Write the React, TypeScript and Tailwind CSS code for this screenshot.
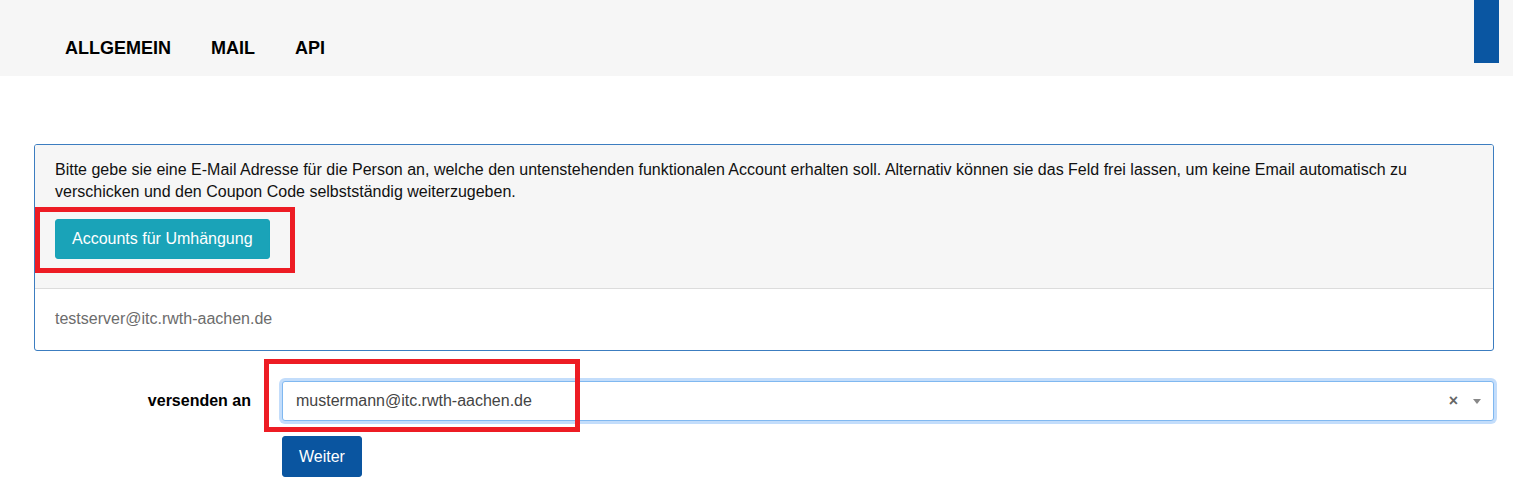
import React from 'react';

const navItems = ['ALLGEMEIN', 'MAIL', 'API'];

const App: React.FC = () => {
    return (
        <div className="relative min-h-[493px] bg-white text-black font-['Liberation_Sans',Arial,sans-serif]">
            {/* --- HEADER --- */}
            <div className="relative h-[76px] bg-[#f6f6f6]">
                <nav className="flex pl-[45px] pt-[35px]">
                    {navItems.map(item => (
                        <a key={item} className="px-[20px] text-[18px] leading-[26px] font-bold text-black">{item}</a>
                    ))}
                </nav>
                <div className="absolute left-[1474px] top-0 w-[25px] h-[63px] bg-[#0a56a2]"></div>
            </div>

            {/* --- CONTENT --- */}
            <div className="ml-[34px] w-[1460px] pt-[68px]">
                <div className="border border-[#3c7dc0] rounded-[3px] overflow-hidden">
                    <div className="bg-[#f6f6f6] px-[20px] pt-[14px] pb-[29px] border-b border-[#dcdcdc]">
                        <p className="text-[16px] leading-[22px] text-[#111]">
                            Bitte gebe sie eine E-Mail Adresse für die Person an, welche den untenstehenden funktionalen Account erhalten soll. Alternativ können sie das Feld frei lassen, um keine Email automatisch zu verschicken und den Coupon Code selbstständig weiterzugeben.
                        </p>
                        <button className="mt-[16px] h-[40px] px-[16px] border border-[#17a2b8] bg-[#1aa3b8] text-white text-[16px] rounded-[3px]">
                            Accounts für Umhängung
                        </button>
                    </div>
                    <div className="px-[20px] pt-[18px] pb-[19px] text-[16px] leading-[24px] text-[#6c6c6c]">
                        testserver@itc.rwth-aachen.de
                    </div>
                </div>

                <div className="flex items-center mt-[30px]">
                    <label className="w-[232px] pr-[15px] text-right text-[16px] font-bold text-black">versenden an</label>
                    <div className="flex-1 pl-[16px]">
                        <div className="flex items-center h-[40px] border border-[#80b8f0] rounded-[3px] bg-white shadow-[0_0_0_3px_#c3ddfb] pl-[13px] pr-[12px]">
                            <span className="flex-1 text-[16px] text-[#444]">mustermann@itc.rwth-aachen.de</span>
                            <span className="text-[16px] font-bold text-[#666] leading-none mr-[15px]">×</span>
                            <span className="w-0 h-0 border-l-[4px] border-r-[4px] border-t-[5px] border-l-transparent border-r-transparent border-t-[#888]"></span>
                        </div>
                    </div>
                </div>

                <div className="pl-[248px] mt-[15px]">
                    <button className="h-[41px] px-[16px] border border-[#0a55a0] bg-[#0a55a0] text-white text-[16px] rounded-[3px]">Weiter</button>
                </div>
            </div>

            {/* annotation frames */}
            <div className="absolute left-[35px] top-[207px] w-[260px] h-[66px] border-[5px] border-[#ed1c24]"></div>
            <div className="absolute left-[264px] top-[359px] w-[316px] h-[73px] border-[5px] border-[#ed1c24]"></div>
        </div>
    );
};

export default App;
